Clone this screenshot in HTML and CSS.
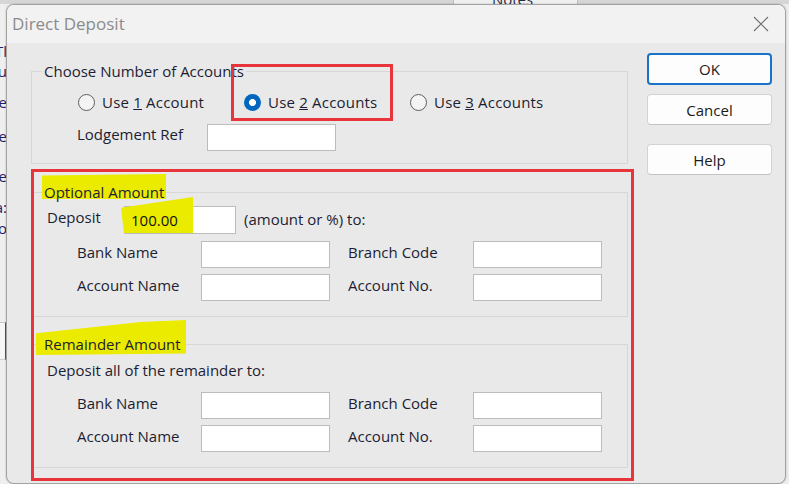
FILE: index.html
```html
<!DOCTYPE html>
<html>
<head>
<meta charset="utf-8">
<link rel="stylesheet" href="styles.css">
</head>
<body>
<div class="desk">
  <div class="topstrip">
    <div class="tab"><span class="tabtext">Notes</span></div>
  </div>
  <div class="mainrow">
    <div class="leftstrip">
      <div class="frag f1">Tl</div>
      <div class="frag f2">Du</div>
      <div class="frag f3">Are</div>
      <div class="frag f4">Be</div>
      <div class="frag f5">Be</div>
      <div class="frag f6">Pa:</div>
      <div class="frag f7">To</div>
      <div class="bgbox"></div>
    </div>
    <div class="dialog">
      <div class="titlebar">
        <span class="title">Direct Deposit</span>
        <svg class="close" width="16" height="16" viewBox="0 0 16 16"><path d="M1 1 L15 15 M15 1 L1 15" stroke="#6f6f6f" stroke-width="1.1" fill="none"/></svg>
      </div>
      <div class="body">
        <div class="leftcol">
          <fieldset class="group g1">
            <legend>Choose Number of Accounts</legend>
            <div class="radios">
              <div class="radio"><span class="dot"></span><span>Use <u>1</u> Account</span></div>
              <div class="radio on marked"><span class="dot"></span><span>Use <u>2</u> Accounts</span></div>
              <div class="radio"><span class="dot"></span><span>Use <u>3</u> Accounts</span></div>
            </div>
            <div class="lodge"><span class="lbl lodgelbl">Lodgement Ref</span><span class="input"></span></div>
          </fieldset>
          <div class="redbox">
            <fieldset class="group g2">
              <legend><span class="hl hl-opt">Optional Amount</span></legend>
              <div class="deprow">
                <span class="deplbl">Deposit</span>
                <span class="input depinput"><span class="val">100.00</span></span>
                <span class="hint">(amount or %) to:</span>
              </div>
              <div class="fields">
                <span class="lbl">Bank Name</span><span class="input"></span><span></span><span class="lbl">Branch Code</span><span class="input"></span>
                <span class="lbl">Account Name</span><span class="input"></span><span></span><span class="lbl">Account No.</span><span class="input"></span>
              </div>
            </fieldset>
            <fieldset class="group g3">
              <legend><span class="hl hl-rem">Remainder Amount</span></legend>
              <div class="remrow">Deposit all of the remainder to:</div>
              <div class="fields">
                <span class="lbl">Bank Name</span><span class="input"></span><span></span><span class="lbl">Branch Code</span><span class="input"></span>
                <span class="lbl">Account Name</span><span class="input"></span><span></span><span class="lbl">Account No.</span><span class="input"></span>
              </div>
            </fieldset>
          </div>
        </div>
        <div class="buttons">
          <div class="btn default">OK</div>
          <div class="btn">Cancel</div>
          <div class="btn help">Help</div>
        </div>
      </div>
    </div>
  </div>
</div>
</body>
</html>
```
FILE: styles.css
```css
*, *::before, *::after { box-sizing: border-box; }
html, body { margin: 0; padding: 0; }
body {
  font-family: "Open Sans", "Noto Sans", sans-serif;
  font-size: 15px;
  color: #1d1d33;
  background: #ececec;
}
.desk {
  width: 789px;
  height: 484px;
  overflow: hidden;
  display: flex;
  flex-direction: column;
  background: #ededed;
}
.topstrip {
  height: 4px;
  flex: none;
  display: flex;
  background: #d6d6d6;
  padding-left: 453px;
  overflow: hidden;
}
.tab {
  width: 125px;
  height: 4px;
  background: #f0f0f0;
  border-left: 1px solid #bdbdbd;
  border-right: 1px solid #bdbdbd;
  display: flex;
  justify-content: center;
  align-items: flex-end;
  overflow: hidden;
}
.tabtext {
  font-size: 15px;
  line-height: 10px;
  color: #2a2a44;
  margin-left: -6px;
}
.mainrow {
  display: flex;
  flex: 1;
}
.leftstrip {
  width: 6px;
  flex: none;
  overflow: hidden;
  display: flex;
  flex-direction: column;
  align-items: flex-end;
  background: #efefef;
}
.frag {
  font-size: 15px;
  line-height: 18px;
  height: 18px;
  white-space: nowrap;
  color: #1e1e6a;
  display: flex;
  justify-content: flex-end;
  width: 6px;
  margin-right: -1px;
}
.f1 { margin-top: 38px; }
.f2 { margin-top: 2px; }
.f3 { margin-top: 13px; }
.f4 { margin-top: 16px; }
.f5 { margin-top: 22px; }
.f6 { margin-top: 13px; }
.f7 { margin-top: 3px; }
.bgbox {
  margin-top: 85px;
  width: 6px;
  height: 38px;
  border-top: 1px solid #c6c6c6;
  border-bottom: 1px solid #d0d0d0;
  border-right: 1px solid #555;
  background: #f6f6f6;
}
.dialog {
  width: 780px;
  height: 480px;
  flex: none;
  border: 1px solid #a2a2a2;
  border-radius: 8px;
  background: #e9e9e9;
  overflow: hidden;
  display: flex;
  flex-direction: column;
  box-shadow: 0 0 2px rgba(0,0,0,0.25);
}
.titlebar {
  height: 38px;
  flex: none;
  background: #f2f2f2;
  display: flex;
  align-items: center;
  justify-content: space-between;
  padding: 0 16px 1px 5px;
}
.title {
  font-size: 17px;
  color: #8b8b8b;
}
.close { display: block; }
.body {
  flex: 1;
  display: flex;
  padding-left: 24px;
}
.leftcol {
  width: 603px;
  display: flex;
  flex-direction: column;
}
.group {
  margin: 0;
  border: 1px solid #d7d7d7;
  min-width: 0;
}
.group legend {
  padding: 0 2px;
  line-height: 20px;
  font-size: 15px;
  color: #1d1d33;
}
.g1 {
  margin-top: 18px;
  width: 597px;
  padding: 11px 10px 12px 10px;
}
.radios {
  display: grid;
  grid-template-columns: 166px 166px 166px;
  margin-left: 36px;
  height: 20px;
  align-items: center;
  letter-spacing: 0.2px;
}
.radio {
  display: flex;
  align-items: center;
  gap: 7px;
  position: relative;
  white-space: nowrap;
}
.dot {
  width: 17px;
  height: 17px;
  border-radius: 50%;
  border: 1px solid #5e5e5e;
  background: #f4f4f4;
  flex: none;
}
.radio.on .dot {
  border: none;
  background: radial-gradient(circle, #ffffff 0 3.2px, #0067c0 3.8px);
}
.marked::after {
  content: "";
  position: absolute;
  left: -13px;
  top: -28px;
  width: 162px;
  height: 57px;
  border: 3px solid #e8353b;
}
.lodge {
  display: flex;
  align-items: center;
  margin-top: 12px;
  margin-left: 35px;
}
.lodgelbl { width: 130px; margin-top: -8px; }
.input {
  display: block;
  width: 129px;
  height: 27px;
  background: #ffffff;
  border: 1px solid #bcbcbc;
}
.redbox {
  margin-top: 5px;
  width: 603px;
  border: 3px solid #e8353b;
  padding: 0 3px 0 0;
  display: flex;
  flex-direction: column;
}
.g2, .g3 {
  border-left: none;
  padding: 0 8px 15px 8px;
}
.g2 { margin-top: 10px; }
.g3 { margin-top: 17px; margin-bottom: 10px; padding-bottom: 15px; }
.deprow {
  display: flex;
  align-items: center;
  margin-top: 4px;
  margin-left: 5px;
}
.deplbl { width: 77px; margin-top: -6px; }
.depinput {
  width: 112px;
  height: 28px;
  position: relative;
  z-index: 0;
  display: flex;
  align-items: center;
  padding-left: 6px;
}
.depinput::after {
  content: "";
  position: absolute;
  z-index: -1;
  left: -4px;
  top: -10px;
  width: 72px;
  height: 36px;
  background: #ebeb00;
  clip-path: polygon(0 30%, 100% 0, 100% 100%, 4% 100%);
}
.val { color: #111; }
.hint { margin-left: 8px; margin-top: -2px; }
.fields {
  display: grid;
  grid-template-columns: 124px 129px 18px 125px 129px;
  grid-auto-rows: 27px;
  row-gap: 6px;
  align-items: center;
  margin-left: 35px;
  margin-top: 7px;
}
.fields .lbl { margin-top: -5px; }
.remrow {
  margin-top: 6px;
  margin-left: 5px;
  line-height: 20px;
}
.g3 .fields { margin-top: 12px; }
.hl {
  position: relative;
  z-index: 0;
}
.hl::before {
  content: "";
  position: absolute;
  z-index: -1;
  background: #ebeb00;
}
.hl-opt::before {
  left: -2px;
  top: -8px;
  width: 124px;
  height: 25px;
  clip-path: polygon(0 6%, 100% 0, 100% 100%, 0 100%);
}
.hl-rem::before {
  left: -8px;
  top: -14px;
  width: 150px;
  height: 35px;
  clip-path: polygon(0 38%, 70% 6%, 100% 0, 100% 96%, 0 100%);
}
.buttons {
  margin-left: 13px;
  width: 125px;
  display: flex;
  flex-direction: column;
  padding-top: 10px;
}
.btn {
  height: 31px;
  background: #fdfdfd;
  border: 1px solid #d3d3d3;
  border-bottom-color: #c2c2c2;
  border-radius: 4px;
  display: flex;
  align-items: center;
  justify-content: center;
  margin-bottom: 9px;
  color: #1b1b1b;
}
.btn.default {
  height: 32px;
  border: 2px solid #1a73c8;
}
.btn.help { margin-top: 10px; }
```
